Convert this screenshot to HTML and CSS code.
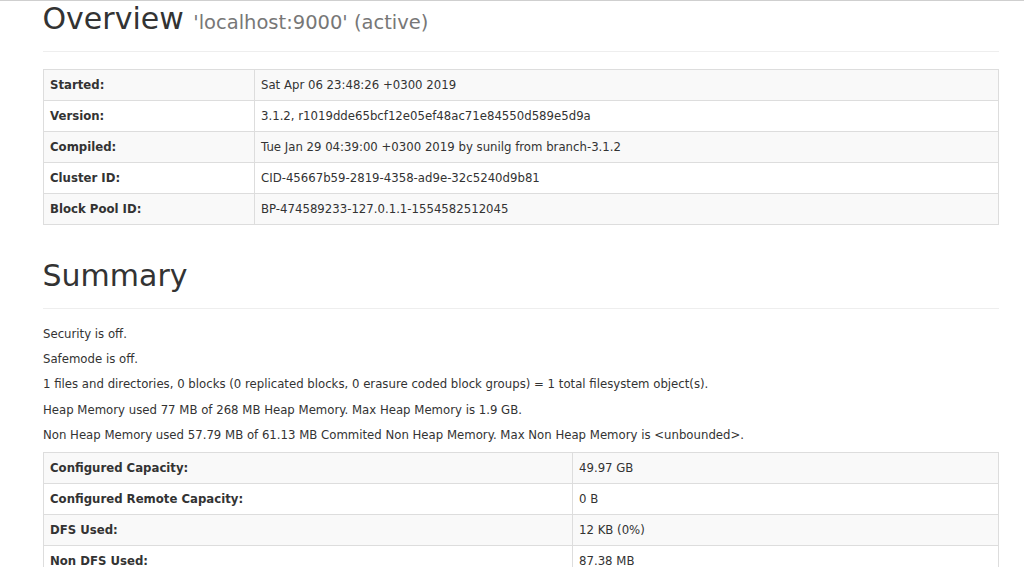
FILE: index.html
```html
<!DOCTYPE html>
<html>
<head>
<meta charset="utf-8">
<title>Namenode information</title>
<link rel="stylesheet" href="styles.css">
</head>
<body>
<div class="topline"></div>
<div class="container">
  <div class="page-header">
    <h1>Overview <small>'localhost:9000' (active)</small></h1>
  </div>
  <table class="table overview">
    <tr><th>Started:</th><td>Sat Apr 06 23:48:26 +0300 2019</td></tr>
    <tr><th>Version:</th><td>3.1.2, r1019dde65bcf12e05ef48ac71e84550d589e5d9a</td></tr>
    <tr><th>Compiled:</th><td>Tue Jan 29 04:39:00 +0300 2019 by sunilg from branch-3.1.2</td></tr>
    <tr><th>Cluster ID:</th><td>CID-45667b59-2819-4358-ad9e-32c5240d9b81</td></tr>
    <tr><th>Block Pool ID:</th><td>BP-474589233-127.0.1.1-1554582512045</td></tr>
  </table>

  <div class="page-header">
    <h1>Summary</h1>
  </div>
  <p>Security is off.</p>
  <p>Safemode is off.</p>
  <p>1 files and directories, 0 blocks (0 replicated blocks, 0 erasure coded block groups) = 1 total filesystem object(s).</p>
  <p>Heap Memory used 77 MB of 268 MB Heap Memory. Max Heap Memory is 1.9 GB.</p>
  <p>Non Heap Memory used 57.79 MB of 61.13 MB Commited Non Heap Memory. Max Non Heap Memory is &lt;unbounded&gt;.</p>
  <table class="table summary">
    <tr><th>Configured Capacity:</th><td>49.97 GB</td></tr>
    <tr><th>Configured Remote Capacity:</th><td>0 B</td></tr>
    <tr><th>DFS Used:</th><td>12 KB (0%)</td></tr>
    <tr><th>Non DFS Used:</th><td>87.38 MB</td></tr>
  </table>
</div>
</body>
</html>
```

FILE: styles.css
```css
html, body {
  margin: 0;
  padding: 0;
  background: #fff;
}
body {
  font-family: "DejaVu Sans", sans-serif;
  font-size: 11.72px;
  line-height: 16.8px;
  color: #333;
}
.topline {
  height: 1px;
  background: #cfcfcf;
}
.container {
  width: 956px;
  margin-left: 43px;
  padding-top: 1.2px;
}
.page-header {
  margin: 34px 0 17px;
  padding-bottom: 7.55px;
  border-bottom: 1px solid #eee;
}
.container > .page-header:first-child {
  margin-top: 0;
}
h1 {
  margin: 0 0 8.4px;
  font-size: 30px;
  font-weight: 500;
  line-height: 1.1;
  color: #333;
  margin-left: -0.5px;
}
h1 small {
  font-size: 65%;
  font-weight: normal;
  line-height: 1;
  color: #777;
}
p {
  margin: 0 0 8.4px;
}
.table {
  width: 100%;
  border-collapse: collapse;
  border-spacing: 0;
  border: 1px solid #ddd;
  margin-bottom: 16.8px;
}
.table th, .table td {
  padding: 7px 6px;
  line-height: 16px;
  text-align: left;
  vertical-align: top;
  border: 1px solid #ddd;
}
.table th {
  font-weight: bold;
}
.table tr:nth-child(odd) {
  background: #f9f9f9;
}
.overview th {
  width: 198px;
}
.summary th {
  width: 516px;
}
```
